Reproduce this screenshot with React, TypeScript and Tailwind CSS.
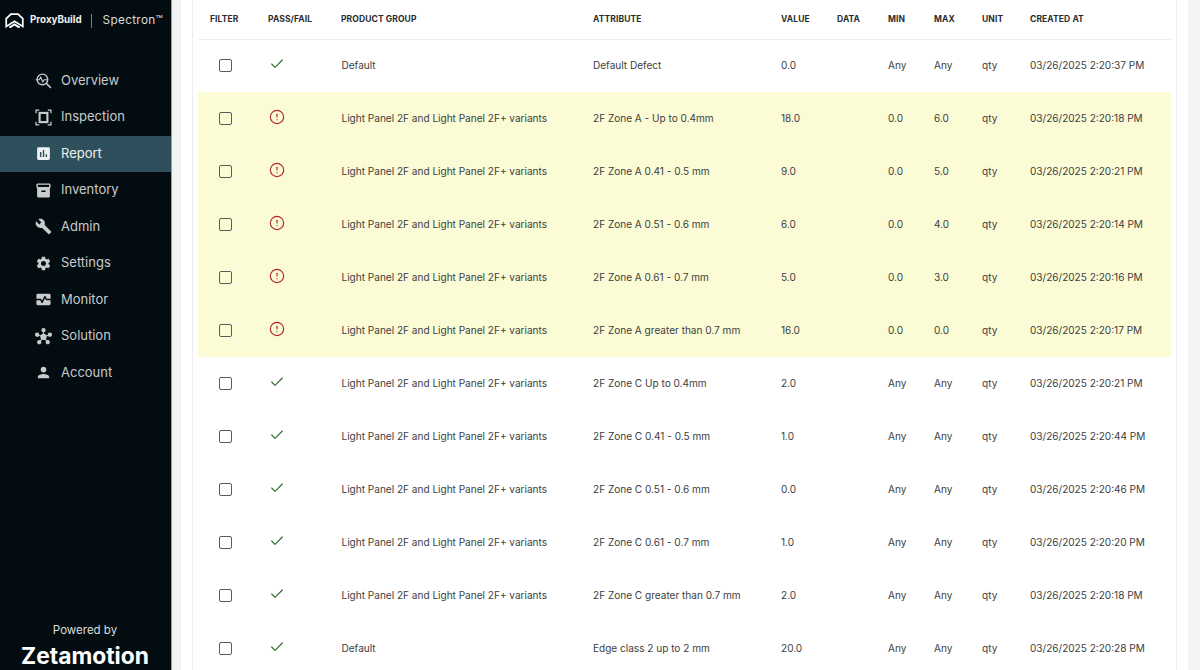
import { Check, CircleAlert } from "lucide-react";
import {
  MdAssessment,
  MdBuild,
  MdHub,
  MdInventory2,
  MdMonitorHeart,
  MdPerson,
  MdSettings,
} from "react-icons/md";
import type { ComponentType } from "react";

type Row = {
  pass: boolean;
  group: string;
  attribute: string;
  value: string;
  min: string;
  max: string;
  created: string;
};

const PANEL = "Light Panel 2F and Light Panel 2F+ variants";

const rows: Row[] = [
  { pass: true, group: "Default", attribute: "Default Defect", value: "0.0", min: "Any", max: "Any", created: "03/26/2025 2:20:37 PM" },
  { pass: false, group: PANEL, attribute: "2F Zone A - Up to 0.4mm", value: "18.0", min: "0.0", max: "6.0", created: "03/26/2025 2:20:18 PM" },
  { pass: false, group: PANEL, attribute: "2F Zone A 0.41 - 0.5 mm", value: "9.0", min: "0.0", max: "5.0", created: "03/26/2025 2:20:21 PM" },
  { pass: false, group: PANEL, attribute: "2F Zone A 0.51 - 0.6 mm", value: "6.0", min: "0.0", max: "4.0", created: "03/26/2025 2:20:14 PM" },
  { pass: false, group: PANEL, attribute: "2F Zone A 0.61 - 0.7 mm", value: "5.0", min: "0.0", max: "3.0", created: "03/26/2025 2:20:16 PM" },
  { pass: false, group: PANEL, attribute: "2F Zone A greater than 0.7 mm", value: "16.0", min: "0.0", max: "0.0", created: "03/26/2025 2:20:17 PM" },
  { pass: true, group: PANEL, attribute: "2F Zone C Up to 0.4mm", value: "2.0", min: "Any", max: "Any", created: "03/26/2025 2:20:21 PM" },
  { pass: true, group: PANEL, attribute: "2F Zone C 0.41 - 0.5 mm", value: "1.0", min: "Any", max: "Any", created: "03/26/2025 2:20:44 PM" },
  { pass: true, group: PANEL, attribute: "2F Zone C 0.51 - 0.6 mm", value: "0.0", min: "Any", max: "Any", created: "03/26/2025 2:20:46 PM" },
  { pass: true, group: PANEL, attribute: "2F Zone C 0.61 - 0.7 mm", value: "1.0", min: "Any", max: "Any", created: "03/26/2025 2:20:20 PM" },
  { pass: true, group: PANEL, attribute: "2F Zone C greater than 0.7 mm", value: "2.0", min: "Any", max: "Any", created: "03/26/2025 2:20:18 PM" },
  { pass: true, group: "Default", attribute: "Edge class 2 up to 2 mm", value: "20.0", min: "Any", max: "Any", created: "03/26/2025 2:20:28 PM" },
];

function OverviewIcon({ className }: { className?: string }) {
  return (
    <svg viewBox="0 0 24 24" className={className} fill="none" stroke="currentColor" strokeWidth="1.9">
      <circle cx="10.500" cy="10.500" r="7.500" />
      <path d="M16 16l6.500 6.500" strokeWidth="2.200" />
      <path d="M1 11h5l2-3.500 3 6.500 2-3h4" strokeWidth="1.600" />
    </svg>
  );
}

function InspectionIcon({ className }: { className?: string }) {
  return (
    <svg viewBox="0 0 24 24" className={className} fill="none" stroke="currentColor">
      <path d="M1.500 6V1.500H6M18 1.500h4.500V6M22.500 18v4.500H18M6 22.500H1.500V18" strokeWidth="1.800" />
      <rect x="6.500" y="5.500" width="11" height="13" strokeWidth="3" />
    </svg>
  );
}

function LogoMark() {
  return (
    <svg viewBox="0 0 24 19" className="w-[19px] h-[15px] shrink-0" fill="none" stroke="white" strokeWidth="2.200">
      <path d="M1.500 17V7l6-5.500h9l6 5.500v10L12 10.500z" strokeLinejoin="miter" />
      <path d="M5.500 18.500L12 14.500l6.500 4" strokeWidth="2.600" />
    </svg>
  );
}

const navItems: { label: string; icon: ComponentType<{ className?: string }>; active?: boolean }[] = [
  { label: "Overview", icon: OverviewIcon },
  { label: "Inspection", icon: InspectionIcon },
  { label: "Report", icon: MdAssessment, active: true },
  { label: "Inventory", icon: MdInventory2 },
  { label: "Admin", icon: MdBuild },
  { label: "Settings", icon: MdSettings },
  { label: "Monitor", icon: MdMonitorHeart },
  { label: "Solution", icon: MdHub },
  { label: "Account", icon: MdPerson },
];

function Sidebar() {
  return (
    <aside className="w-[172px] h-full shrink-0 bg-[#030d11] border-r border-[#9a9d9e] flex flex-col overflow-hidden">
      <div className="flex items-center h-[41px] pl-[5px]">
        <LogoMark />
        <span className="ml-[6px] text-[9.800px] font-bold text-[#eef0f0]">ProxyBuild</span>
        <span className="ml-[9px] h-[14px] w-px bg-[#777d80]" />
        <span className="ml-[11px] text-[11.800px] tracking-[0.3px] text-[#d9dcdd]">Spectron™</span>
      </div>
      <nav className="mt-[21.500px] flex flex-col gap-[0.5px]">
        {navItems.map((item) => (
          <div
            key={item.label}
            className={`flex items-center h-[36px] pl-[35px] gap-[9px] text-[13px] ${
              item.active ? "bg-[#2e505c] text-[#eef1f2]" : "text-[#c9cbcc]"
            }`}
          >
            <item.icon className="size-[17px] shrink-0" />
            <span>{item.label}</span>
          </div>
        ))}
      </nav>
      <div className="mt-auto text-center text-white">
        <div className="text-[11.500px] leading-[16px] text-[#dcdddd] pr-[1px]">Powered by</div>
        <div className="text-[22.800px] leading-[32px] font-bold pr-[1px] mb-[-2px] mt-[2px]">Zetamotion</div>
      </div>
    </aside>
  );
}

function Checkbox() {
  return <div className="ml-[20.500px] size-[13px] rounded-[2px] border-[1.500px] border-[#5b5b5b]" />;
}

function ResultsTable() {
  const head = ["FILTER", "PASS/FAIL", "PRODUCT GROUP", "ATTRIBUTE", "VALUE", "DATA", "MIN", "MAX", "UNIT", "CREATED AT"];
  return (
    <table className="w-full table-fixed border-collapse text-[10.050px] text-[#3d4042]">
      <colgroup>
        <col className="w-[58px]" />
        <col className="w-[73px]" />
        <col className="w-[252px]" />
        <col className="w-[188px]" />
        <col className="w-[56px]" />
        <col className="w-[51px]" />
        <col className="w-[46px]" />
        <col className="w-[48px]" />
        <col className="w-[48px]" />
        <col />
      </colgroup>
      <thead>
        <tr className="h-[39px] border-b border-[#eceeef]">
          {head.map((h) => (
            <th key={h} className="pl-[12px] pt-[1px] text-left text-[8.500px] tracking-[0.1px] font-bold text-[#2a2c2e] whitespace-nowrap">
              {h}
            </th>
          ))}
        </tr>
      </thead>
      <tbody>
        {rows.map((r, i) => (
          <tr key={i} className={`h-[53px] ${r.pass ? "" : "bg-[#fbfbd5]"}`}>
            <td>
              <Checkbox />
            </td>
            <td className="pl-[12px]">
              {r.pass ? (
                <Check className="size-[16px] ml-[0.5px] mb-[3px] text-[#2f6b2c]" strokeWidth={1.7} />
              ) : (
                <CircleAlert className="size-[16px] ml-[0.5px] mb-[3px] text-[#b3282d]" strokeWidth={1.7} />
              )}
            </td>
            <td className="pl-[12.500px] whitespace-nowrap">{r.group}</td>
            <td className="pl-[12px] whitespace-nowrap">{r.attribute}</td>
            <td className="pl-[12px]">{r.value}</td>
            <td className="pl-[12px]" />
            <td className="pl-[12px]">{r.min}</td>
            <td className="pl-[12px]">{r.max}</td>
            <td className="pl-[12px]">qty</td>
            <td className="pl-[12px] whitespace-nowrap">{r.created}</td>
          </tr>
        ))}
      </tbody>
    </table>
  );
}

export default function App() {
  return (
    <div className="flex h-[670px] w-[1200px] overflow-hidden bg-[#f2f3f3] font-['Inter',sans-serif]">
      <Sidebar />
      <main className="flex-1 min-w-0 pl-[9px] pr-[12px] overflow-hidden">
        <div className="h-full bg-white px-[11px]">
          <div className="h-full border-x border-[#ececec] px-[5px]">
            <ResultsTable />
          </div>
        </div>
      </main>
    </div>
  );
}
